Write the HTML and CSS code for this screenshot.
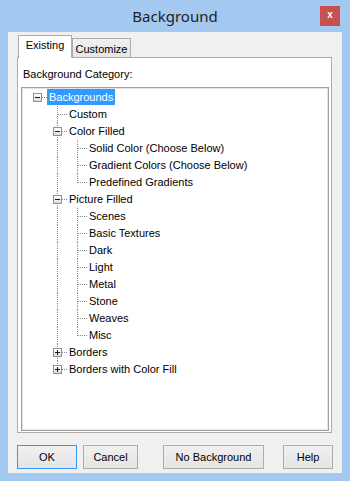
FILE: index.html
```html
<!DOCTYPE html>
<html lang="en">
<head>
  <meta charset="UTF-8" />
  <title>Background</title>
  <link rel="stylesheet" href="styles.css">
</head>
<body>
  <div class="window">
    <div class="titlebar">
      <div class="title">Background</div>
      <div class="close">x</div>
    </div>

    <div class="client">
      <div class="tabs">
        <div class="tab active">Existing</div>
        <div class="tab">Customize</div>
      </div>

      <div class="panel">
        <div class="label">Background Category:</div>
        <div class="tree">
          <div class="row">
            <div class="cell root"><span class="box"></span></div>
            <span class="text sel">Backgrounds</span>
          </div>
          <div class="row">
            <div class="cell"></div>
            <div class="cell tee"></div>
            <span class="text">Custom</span>
          </div>
          <div class="row">
            <div class="cell"></div>
            <div class="cell tee"><span class="box"></span></div>
            <span class="text">Color Filled</span>
          </div>
          <div class="row">
            <div class="cell"></div>
            <div class="cell line"></div>
            <div class="cell tee"></div>
            <span class="text">Solid Color (Choose Below)</span>
          </div>
          <div class="row">
            <div class="cell"></div>
            <div class="cell line"></div>
            <div class="cell tee"></div>
            <span class="text">Gradient Colors (Choose Below)</span>
          </div>
          <div class="row">
            <div class="cell"></div>
            <div class="cell line"></div>
            <div class="cell end"></div>
            <span class="text">Predefined Gradients</span>
          </div>
          <div class="row">
            <div class="cell"></div>
            <div class="cell tee"><span class="box"></span></div>
            <span class="text">Picture Filled</span>
          </div>
          <div class="row">
            <div class="cell"></div>
            <div class="cell line"></div>
            <div class="cell tee"></div>
            <span class="text">Scenes</span>
          </div>
          <div class="row">
            <div class="cell"></div>
            <div class="cell line"></div>
            <div class="cell tee"></div>
            <span class="text">Basic Textures</span>
          </div>
          <div class="row">
            <div class="cell"></div>
            <div class="cell line"></div>
            <div class="cell tee"></div>
            <span class="text">Dark</span>
          </div>
          <div class="row">
            <div class="cell"></div>
            <div class="cell line"></div>
            <div class="cell tee"></div>
            <span class="text">Light</span>
          </div>
          <div class="row">
            <div class="cell"></div>
            <div class="cell line"></div>
            <div class="cell tee"></div>
            <span class="text">Metal</span>
          </div>
          <div class="row">
            <div class="cell"></div>
            <div class="cell line"></div>
            <div class="cell tee"></div>
            <span class="text">Stone</span>
          </div>
          <div class="row">
            <div class="cell"></div>
            <div class="cell line"></div>
            <div class="cell tee"></div>
            <span class="text">Weaves</span>
          </div>
          <div class="row">
            <div class="cell"></div>
            <div class="cell line"></div>
            <div class="cell end"></div>
            <span class="text">Misc</span>
          </div>
          <div class="row">
            <div class="cell"></div>
            <div class="cell tee"><span class="box plus"></span></div>
            <span class="text">Borders</span>
          </div>
          <div class="row">
            <div class="cell"></div>
            <div class="cell end"><span class="box plus"></span></div>
            <span class="text">Borders with Color Fill</span>
          </div>
        </div>
      </div>

      <div class="buttons">
        <div class="btn ok">OK</div>
        <div class="btn cancel">Cancel</div>
        <div class="btn nobg">No Background</div>
        <div class="btn help">Help</div>
      </div>
    </div>
  </div>
</body>
</html>
```

FILE: styles.css
```css
* {
  box-sizing: border-box;
}

html, body {
  margin: 0;
  height: 100%;
}

body {
  background: #a3c9f1;
  font-family: 'Liberation Sans', Arial, sans-serif;
  font-size: 11px;
  color: #000;
  overflow: hidden;
}

.window {
  width: 350px;
  height: 481px;
  display: flex;
  flex-direction: column;
}

/* Title bar */
.titlebar {
  height: 32px;
  flex-shrink: 0;
  display: grid;
  grid-template-columns: 1fr auto 1fr;
  padding: 0 10px;
}

.title {
  grid-column: 2;
  font-family: 'Noto Sans', sans-serif;
  font-size: 15px;
  line-height: 32px;
  color: #222;
}

.close {
  grid-column: 3;
  justify-self: end;
  margin-top: 6px;
  width: 20px;
  height: 20px;
  background: #c75050;
  color: #fff;
  font-weight: bold;
  font-size: 10px;
  line-height: 18px;
  text-align: center;
}

/* Client area */
.client {
  margin: 0 8px;
  height: 441px;
  background: #f0f0f0;
  padding: 3px 10px 0 9px;
  display: flex;
  flex-direction: column;
}

.tabs {
  display: flex;
  align-items: flex-start;
  height: 22px;
  flex-shrink: 0;
  position: relative;
  z-index: 1;
}

.tab {
  margin-top: 3px;
  width: 59px;
  height: 19px;
  border: 1px solid #acacac;
  border-bottom: none;
  background: linear-gradient(#f0f0f0, #e5e5e5);
  text-align: center;
  padding-top: 3px;
  line-height: 14px;
}

.tab.active {
  margin-top: 0;
  margin-left: 1px;
  width: 54px;
  height: 23px;
  background: #fff;
  padding-top: 2px;
}

.panel {
  height: 376px;
  flex-shrink: 0;
  background: #fff;
  border: 1px solid #acacac;
  padding: 10px 2px 1px 3px;
  display: flex;
  flex-direction: column;
}

.label {
  height: 13px;
  line-height: 13px;
  padding-left: 2px;
  margin-bottom: 6px;
}

/* Tree view */
.tree {
  height: 344px;
  border: 1px solid #a0a0a0;
  box-shadow: inset 0 0 0 1px #e3e3e3;
  padding: 1px 0 0 5px;
  background: #fff;
}

.row {
  display: flex;
  align-items: flex-start;
  height: 17px;
}

.cell {
  position: relative;
  width: 20px;
  height: 17px;
  flex-shrink: 0;
}

.cell.line::before,
.cell.tee::before,
.cell.end::before {
  content: '';
  position: absolute;
  left: 10px;
  top: 0;
  height: 17px;
  border-left: 1px dotted #8c8c8c;
}

.cell.end::before {
  height: 9px;
}

.cell.tee::after,
.cell.end::after,
.cell.root::after {
  content: '';
  position: absolute;
  left: 11px;
  top: 8px;
  width: 9px;
  border-top: 1px dotted #8c8c8c;
}

.box {
  position: absolute;
  left: 6px;
  top: 4px;
  width: 9px;
  height: 9px;
  border: 1px solid #919191;
  background: linear-gradient(#fff, #dcdcdc);
  z-index: 1;
}

.box::before {
  content: '';
  position: absolute;
  left: 1px;
  top: 3px;
  width: 5px;
  height: 1px;
  background: #1c1c1c;
}

.box.plus::after {
  content: '';
  position: absolute;
  left: 3px;
  top: 1px;
  width: 1px;
  height: 5px;
  background: #1c1c1c;
}

.text {
  padding: 0 2px;
  line-height: 16px;
  white-space: nowrap;
}

.text.sel {
  background: #3399ff;
  color: #fff;
}

/* Bottom buttons */
.buttons {
  display: flex;
  margin-top: 12px;
  height: 24px;
  flex-shrink: 0;
}

.btn {
  flex-shrink: 0;
  height: 24px;
  border: 1px solid #acacac;
  background: linear-gradient(#f0f0f0, #e5e5e5);
  line-height: 22px;
  text-align: center;
}

.btn.ok {
  width: 60px;
  border-color: #3399ff;
}

.btn.cancel {
  width: 55px;
  margin-left: 6px;
}

.btn.nobg {
  width: 101px;
  margin-left: 25px;
}

.btn.help {
  width: 50px;
  margin-left: 19px;
}
```
